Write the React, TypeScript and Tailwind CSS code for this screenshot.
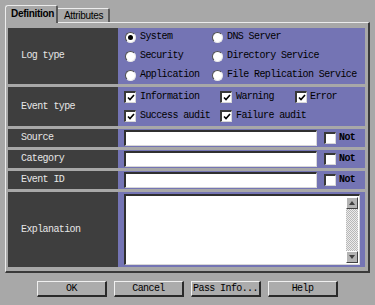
import type { ReactNode } from "react";

const mono = "font-[family-name:'Liberation_Mono',monospace] text-[10px] tracking-[-0.6px] leading-none";
const sans = "font-[family-name:'Liberation_Sans',Arial,sans-serif] text-[10px] tracking-[-0.3px] leading-none";

const Radio = ({ checked }: { checked?: boolean }) => (
    <span className="relative flex items-center justify-center w-[11px] h-[11px] rounded-full bg-white border border-t-[#505050] border-l-[#505050] border-r-[#e8e8e8] border-b-[#e8e8e8] shrink-0">
        {checked && <span className="w-[5px] h-[5px] rounded-full bg-black" />}
    </span>
);

const Check = ({ checked }: { checked?: boolean }) => (
    <span className="flex items-center justify-center w-[12px] h-[12px] bg-white border-t-2 border-l-2 border-r border-b border-t-[#383838] border-l-[#383838] border-r-[#d8d8d8] border-b-[#d8d8d8] shrink-0">
        {checked && (
            <svg width="8" height="7" viewBox="0 0 8 7">
                <path d="M1 3.5 L3 5.5 L7 1" fill="none" stroke="#000" strokeWidth="1.6" />
            </svg>
        )}
    </span>
);

const Row = ({ label, height, children }: { label: string; height: string; children: ReactNode }) => (
    <div className={`flex ${height}`}>
        <div className={`w-[110px] bg-[#3e3e3e] text-[#e6e6e6] flex items-center pl-[13px] ${mono}`}>{label}</div>
        <div className="flex-1 bg-[#7474b4]">{children}</div>
    </div>
);

const TextRow = ({ label }: { label: string }) => (
    <Row label={label} height="h-[18px]">
        <div className="flex items-center h-full pl-[6px]">
            <div className="w-[193px] h-[16px] bg-white border-t-2 border-l-2 border-r border-b border-t-[#303030] border-l-[#303030] border-r-[#d8d8d8] border-b-[#d8d8d8]" />
            <span className="ml-[7px]"><Check /></span>
            <span className={`ml-[3px] text-black font-bold ${mono}`}>Not</span>
        </div>
    </Row>
);

const Btn = ({ children }: { children: ReactNode }) => (
    <div className={`w-[70px] h-[16px] flex items-center justify-center bg-[#acacac] border border-t-[#f0f0f0] border-l-[#f0f0f0] border-r-2 border-b-2 border-r-[#2a2a2a] border-b-[#2a2a2a] text-black ${mono}`}>
        {children}
    </div>
);

export default function App() {
    return (
        <div className="w-[375px] h-[305px] bg-[#a8a8a8] pt-[5px] overflow-hidden">
            <div className="flex items-end pl-[5px] h-[17px]">
                <div className={`relative z-10 -mb-px w-[53px] h-[18px] flex items-center pl-[5px] pb-[2px] bg-[#a8a8a8] border-t border-l border-t-[#ececec] border-l-[#ececec] border-r-2 border-r-[#5a5a5a] rounded-tl-[3px] rounded-tr-[2px] font-bold text-black ${sans}`}>
                    Definition
                </div>
                <div className={`w-[52px] h-[14px] flex items-center pl-[6px] bg-[#a8a8a8] border-t border-t-[#ececec] border-r-2 border-r-[#5a5a5a] rounded-tr-[2px] text-black ${sans}`}>
                    Attributes
                </div>
            </div>
            <div className="ml-[5px] w-[365px] border-t border-l border-t-[#ececec] border-l-[#ececec] border-r-2 border-b-2 border-r-[#3a3a3a] border-b-[#3a3a3a] pt-[5px] pl-[2px] pr-[3px] pb-[4px]">
                <div className="flex flex-col gap-[3px]">
                    <Row label="Log type" height="h-[56px]">
                        <div className={`h-full grid grid-cols-[87px_1fr] auto-rows-[19px] content-center pl-[7px] text-black ${mono}`}>
                            <label className="flex items-center gap-[4px]"><Radio checked />System</label>
                            <label className="flex items-center gap-[4px]"><Radio />DNS Server</label>
                            <label className="flex items-center gap-[4px]"><Radio />Security</label>
                            <label className="flex items-center gap-[4px]"><Radio />Directory Service</label>
                            <label className="flex items-center gap-[4px]"><Radio />Application</label>
                            <label className="flex items-center gap-[4px]"><Radio />File Replication Service</label>
                        </div>
                    </Row>
                    <Row label="Event type" height="h-[39px]">
                        <div className={`h-full grid grid-cols-[96px_75px_1fr] auto-rows-[19px] content-center pl-[6px] text-black ${mono}`}>
                            <label className="flex items-center gap-[4px]"><Check checked />Information</label>
                            <label className="flex items-center gap-[4px]"><Check checked />Warning</label>
                            <label className="flex items-center gap-[3px]"><Check checked />Error</label>
                            <label className="flex items-center gap-[4px]"><Check checked />Success audit</label>
                            <label className="flex items-center gap-[4px] col-span-2"><Check checked />Failure audit</label>
                        </div>
                    </Row>
                    <TextRow label="Source" />
                    <TextRow label="Category" />
                    <TextRow label="Event ID" />
                    <Row label="Explanation" height="h-[75px]">
                        <div className="h-full pt-[2px] pb-[2px] pl-[6px] pr-[5px]">
                            <div className="h-full flex bg-white border-t-2 border-l-2 border-r border-b border-t-[#303030] border-l-[#303030] border-r-[#d8d8d8] border-b-[#d8d8d8]">
                                <div className="flex-1" />
                                <div className="w-[12px] flex flex-col mr-px my-px">
                                    <div className="h-[12px] flex items-center justify-center bg-[#b4b4b4] border border-t-white border-l-white border-r-[#404040] border-b-[#404040]">
                                        <svg width="6" height="4" viewBox="0 0 6 4"><path d="M3 0 L6 4 L0 4 Z" fill="#404040" /></svg>
                                    </div>
                                    <div className="flex-1 bg-[repeating-conic-gradient(#b8b8b8_0_25%,#ececec_0_50%)] bg-[length:2px_2px]" />
                                    <div className="h-[12px] flex items-center justify-center bg-[#b4b4b4] border border-t-white border-l-white border-r-[#404040] border-b-[#404040]">
                                        <svg width="6" height="4" viewBox="0 0 6 4"><path d="M0 0 L6 0 L3 4 Z" fill="#404040" /></svg>
                                    </div>
                                </div>
                            </div>
                        </div>
                    </Row>
                </div>
            </div>
            <div className="flex gap-[7px] pl-[37px] mt-[8px]">
                <Btn>OK</Btn>
                <Btn>Cancel</Btn>
                <Btn>Pass Info...</Btn>
                <Btn>Help</Btn>
            </div>
        </div>
    );
}
